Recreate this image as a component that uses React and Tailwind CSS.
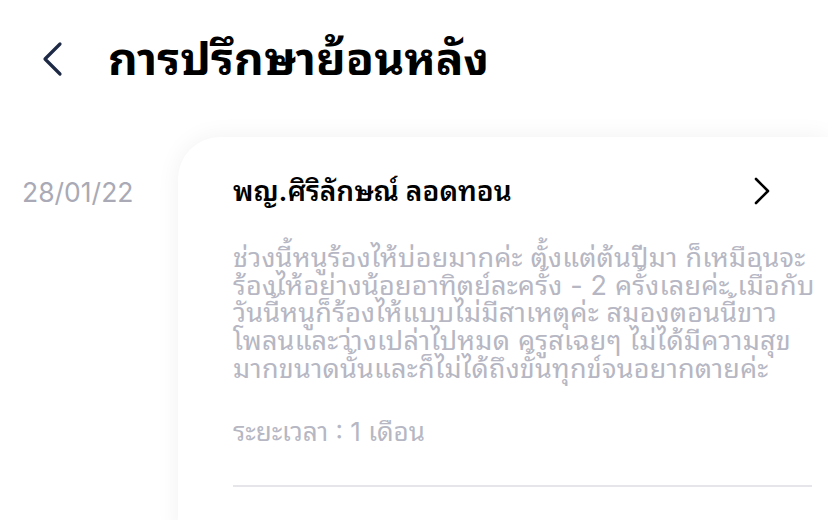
import React from "react";

const lines = [
  "ช่วงนี้หนูร้องไห้บ่อยมากค่ะ ตั้งแต่ต้นปีมา ก็เหมือนจะ",
  "ร้องไห้อย่างน้อยอาทิตย์ละครั้ง - 2 ครั้งเลยค่ะ เมื่อกับ",
  "วันนี้หนูก็ร้องไห้แบบไม่มีสาเหตุค่ะ สมองตอนนี้ขาว",
  "โพลนและว่างเปล่าไปหมด ครูสเฉยๆ ไม่ได้มีความสุข",
  "มากขนาดนั้นและก็ไม่ได้ถึงขั้นทุกข์จนอยากตายค่ะ",
];

export default function App() {
  return (
    <div
      className="w-[828px] h-[520px] overflow-hidden bg-white"
      style={{ fontFamily: 'Inter, "Noto Sans Thai Looped", "Noto Sans", sans-serif' }}
    >
      <div className="flex items-center h-[120px] pl-[40px]">
        <svg width="26" height="38" viewBox="0 0 26 38" className="mt-[-2px]">
          <path d="M20 4 L5 19 L20 34" fill="none" stroke="#1e2a45" strokeWidth="3.2" strokeLinecap="round" strokeLinejoin="round" />
        </svg>
        <h1 className="ml-[42px] text-[46px] font-bold text-black leading-none mt-[-4px]">การปรึกษาย้อนหลัง</h1>
      </div>
      <div className="flex pt-[17px]">
        <div className="w-[178px] shrink-0 pl-[22px] pt-[42px] text-[26.5px] leading-none text-[#a9aab5]">28/01/22</div>
        <div className="flex-1 min-w-0 bg-white rounded-tl-[42px] shadow-[0_0_24px_rgba(0,0,0,0.06)] pl-[55px] pr-[16px] pt-[39px] h-[400px]">
          <div className="flex items-center justify-between pr-[40px]">
            <div className="text-[28px] font-semibold text-black leading-none">พญ.ศิริลักษณ์ ลอดทอน</div>
            <svg width="20" height="30" viewBox="0 0 20 30">
              <path d="M4 3 L16 15 L4 27" fill="none" stroke="#000" strokeWidth="2.6" strokeLinecap="round" strokeLinejoin="round" />
            </svg>
          </div>
          <div className="mt-[38px] text-[27px] leading-[27.7px] tracking-[0.2px] text-[#b6b7c3] whitespace-nowrap">
            {lines.map((l, i) => (
              <div key={i}>{l}</div>
            ))}
          </div>
          <div className="mt-[36px] text-[26px] leading-none text-[#b6b7c3]">ระยะเวลา : 1 เดือน</div>
          <div className="mt-[40px] h-[2px] bg-[#e6e6ea]" />
        </div>
      </div>
    </div>
  );
}
